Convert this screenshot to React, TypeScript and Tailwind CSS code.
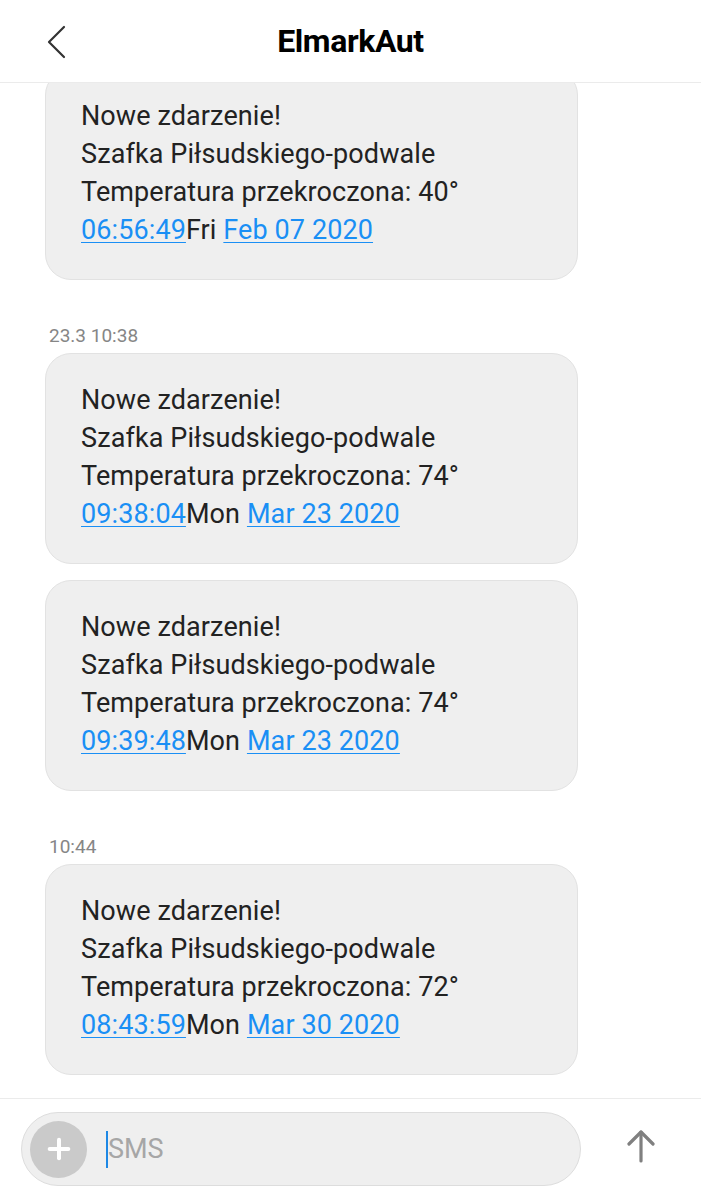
import { Plus } from "lucide-react";

interface Message {
  time: string;
  day: string;
  date: string;
  temp: number;
  stamp?: string;
}

const messages: Message[] = [
  { time: "06:56:49", day: "Fri", date: "Feb 07 2020", temp: 40 },
  { time: "09:38:04", day: "Mon", date: "Mar 23 2020", temp: 74, stamp: "23.3 10:38" },
  { time: "09:39:48", day: "Mon", date: "Mar 23 2020", temp: 74 },
  { time: "08:43:59", day: "Mon", date: "Mar 30 2020", temp: 72, stamp: "10:44" },
];

function Bubble({ msg }: { msg: Message }) {
  return (
    <div className="w-[533px] rounded-[26px] border border-[#e2e2e2] bg-[#efefef] pl-[35px] pr-4 pt-[27px] pb-[30px] text-[27px] leading-[38px] tracking-[0.1px] text-[#222222]">
      <div>Nowe zdarzenie!</div>
      <div>Szafka Piłsudskiego-podwale</div>
      <div>Temperatura przekroczona: {msg.temp}°</div>
      <div>
        <span className="text-[#1a8ff5] underline decoration-1 underline-offset-[3px]">{msg.time}</span>
        {msg.day}{" "}
        <span className="text-[#1a8ff5] underline decoration-1 underline-offset-[3px]">{msg.date}</span>
      </div>
    </div>
  );
}

export default function App() {
  return (
    <div
      className="h-[1200px] w-[701px] bg-white flex flex-col overflow-hidden"
      style={{ fontFamily: "Roboto, 'Noto Sans', sans-serif" }}
    >
      {/* Header */}
      <div className="h-[83px] shrink-0 border-b border-[#ebebeb] flex items-center relative z-10 bg-white">
        <svg
          className="absolute left-[44px] top-[24px]"
          width="26"
          height="38"
          viewBox="0 0 26 38"
          fill="none"
          stroke="#333333"
          strokeWidth="2.2"
          strokeLinecap="round"
          strokeLinejoin="round"
        >
          <path d="M20 3 L5 18 L20 33" />
        </svg>
        <h1 className="w-full text-center text-[32px] font-bold text-black tracking-[-0.4px]">ElmarkAut</h1>
      </div>

      {/* Conversation */}
      <div className="flex-1 min-h-0 overflow-hidden pl-[45px]">
        <div className="-mt-[14px] flex flex-col">
          {messages.map((msg, i) => (
            <div key={i} className={msg.stamp ? "mt-[44px]" : i === 0 ? "" : "mt-4"}>
              {msg.stamp && (
                <div className="mb-[5px] pl-1 text-[19px] leading-[24px] text-[#868686]">{msg.stamp}</div>
              )}
              <Bubble msg={msg} />
            </div>
          ))}
        </div>
      </div>

      {/* Input bar */}
      <div className="h-[102px] shrink-0 border-t border-[#ebebeb] flex items-start pt-[13px] pl-[21px]">
        <div className="w-[560px] h-[74px] rounded-full border border-[#dddddd] bg-[#efefef] flex items-center pl-2">
          <div className="w-[57px] h-[57px] rounded-full bg-[#cacaca] flex items-center justify-center">
            <Plus size={32} color="#ffffff" strokeWidth={3} />
          </div>
          <div className="ml-[19px] w-[2px] h-[37px] bg-[#1e88e5]" />
          <span className="text-[27px] text-[#a6a6a6]">SMS</span>
        </div>
        <div className="flex-1 flex justify-center pt-[18px]">
          <svg width="30" height="34" viewBox="0 0 30 34" fill="none" stroke="#808080" strokeWidth="3.2" strokeLinecap="round" strokeLinejoin="round">
            <path d="M15 2 L15 31" />
            <path d="M3 14 L15 2 L27 14" />
          </svg>
        </div>
      </div>
    </div>
  );
}
